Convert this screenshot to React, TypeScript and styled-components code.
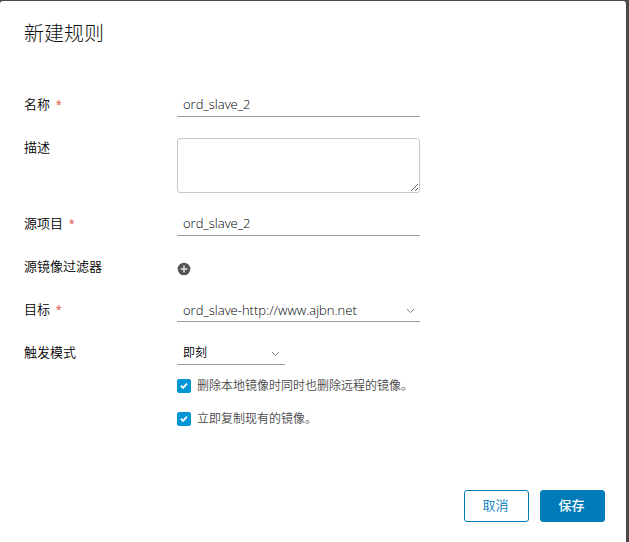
import React from "react";
import styled, { createGlobalStyle } from "styled-components";

const GlobalStyle = createGlobalStyle`
  *, *::before, *::after {
    box-sizing: border-box;
  }
  html, body, #root {
    height: 100%;
  }
  body {
    margin: 0;
    background: #484848;
    color: #000;
    font-family: "Open Sans", "Noto Sans CJK SC", sans-serif;
    font-size: 13px;
    font-weight: 350;
    line-height: 24px;
  }
  button, input, select, textarea {
    font: inherit;
  }
`;

const Backdrop = styled.div`
  min-height: 100%;
  display: flex;
  padding: 1px 3px 0 0;
`;

const Dialog = styled.form`
  flex: 1;
  display: flex;
  flex-direction: column;
  padding: 21px 21px 20px 24px;
  background: #fff;
  border-radius: 3px 3px 0 0;
`;

const Title = styled.h1`
  margin: 0 0 47px;
  font-size: 20px;
  font-weight: 300;
  line-height: 24px;
  color: #111;
`;

const Fields = styled.div`
  display: flex;
  flex-direction: column;
  gap: 19px;
`;

const Row = styled.div`
  display: grid;
  grid-template-columns: 153px minmax(0, 1fr);
  align-items: start;
  min-height: 24px;
`;

const Label = styled.label`
  display: flex;
  gap: 6px;
  line-height: 22px;
`;

const Asterisk = styled.span`
  color: #ea7a68;
  font-size: 10px;
  font-weight: 700;
`;

const TextInput = styled.input`
  width: 243px;
  max-width: 100%;
  height: 24px;
  padding: 0 6px 1px;
  border: 0;
  border-bottom: 1px solid #9a9a9a;
  border-radius: 0;
  background: transparent;
  color: #000;
  font-weight: 300;
  outline: none;
`;

const TextArea = styled.textarea`
  display: block;
  width: 243px;
  max-width: 100%;
  height: 55px;
  margin-top: 2px;
  padding: 4px 6px;
  border: 1px solid #c8c8c8;
  border-radius: 3px;
  background: #fff;
  outline: none;
`;

const SelectBox = styled.div<{ $compact?: boolean }>`
  display: grid;
  align-items: center;
  width: ${(p) => (p.$compact ? "108px" : "243px")};
  max-width: 100%;
  height: 24px;
  border-bottom: 1px solid #9a9a9a;
  font-size: ${(p) => (p.$compact ? "12px" : "13px")};
  font-weight: ${(p) => (p.$compact ? 350 : 300)};

  > * {
    grid-area: 1 / 1;
  }
  > svg {
    justify-self: end;
    margin: 2px 5px 0 0;
    pointer-events: none;
  }
`;

const Select = styled.select`
  appearance: none;
  width: 100%;
  height: 23px;
  padding: 0 20px 0 6px;
  border: 0;
  background: transparent;
  color: #000;
  outline: none;
`;

const IconButton = styled.button`
  display: flex;
  width: 14px;
  height: 24px;
  padding: 4px 0 0;
  align-items: center;
  border: 0;
  background: none;
  cursor: pointer;
`;

const TriggerOptions = styled.div`
  display: flex;
  flex-direction: column;
  gap: 9px;
`;

const CheckLabel = styled.label`
  display: flex;
  align-items: center;
  gap: 6px;
  min-height: 24px;
  font-size: 12px;
  color: #484848;
`;

const CheckText = styled.span`
  line-height: 20px;
`;

const CheckBox = styled.span`
  display: grid;
  flex: none;
  width: 14px;
  height: 14px;

  > * {
    grid-area: 1 / 1;
  }
  > svg {
    pointer-events: none;
  }
`;

const CheckInput = styled.input`
  appearance: none;
  width: 14px;
  height: 14px;
  margin: 0;
  border: 1px solid #0095d3;
  border-radius: 2px;
  background: #fff;

  &:checked {
    background: #0095d3;
  }
  &:not(:checked) + svg {
    display: none;
  }
`;

const Footer = styled.footer`
  display: flex;
  justify-content: flex-end;
  gap: 11px;
  margin-top: auto;
`;

const Button = styled.button<{ $primary?: boolean }>`
  width: 65px;
  height: 32px;
  padding: 0 2px 2px 0;
  border: 1px solid #007cbb;
  border-radius: 3px;
  background: ${(p) => (p.$primary ? "#007cbb" : "#fff")};
  color: ${(p) => (p.$primary ? "#fff" : "#007cbb")};
  font-weight: ${(p) => (p.$primary ? 500 : 350)};
  line-height: 28px;
  cursor: pointer;
`;

const Chevron = () => (
  <svg width="9" height="6" viewBox="0 0 9 6" fill="none" aria-hidden="true">
    <path d="M1 1l3.5 3.6L8 1" stroke="#8a8a8a" />
  </svg>
);

const PlusCircle = () => (
  <svg width="14" height="14" viewBox="0 0 14 14" aria-hidden="true">
    <circle cx="7" cy="7" r="6.3" fill="#545454" />
    <path d="M7 3.6v6.8M3.6 7h6.8" stroke="#e0e0e0" strokeWidth="1.5" />
  </svg>
);

const Tick = () => (
  <svg width="14" height="14" viewBox="0 0 14 14" fill="none" aria-hidden="true">
    <path d="M3.8 6.6l2.2 2.2 4-4.2" stroke="#fff" strokeWidth="1.9" />
  </svg>
);

interface FieldLabelProps {
  htmlFor: string;
  required?: boolean;
  children: React.ReactNode;
}

const FieldLabel = ({ htmlFor, required, children }: FieldLabelProps) => (
  <Label htmlFor={htmlFor}>
    {children}
    {required && <Asterisk>*</Asterisk>}
  </Label>
);

const Check = ({ children }: { children: React.ReactNode }) => (
  <CheckLabel>
    <CheckBox>
      <CheckInput type="checkbox" defaultChecked />
      <Tick />
    </CheckBox>
    <CheckText>{children}</CheckText>
  </CheckLabel>
);

export default function App() {
  return (
    <>
      <GlobalStyle />
      <Backdrop>
        <Dialog role="dialog" aria-labelledby="title" onSubmit={(e) => e.preventDefault()}>
          <Title id="title">新建规则</Title>
          <Fields>
            <Row>
              <FieldLabel htmlFor="name" required>名称</FieldLabel>
              <TextInput id="name" defaultValue="ord_slave_2" />
            </Row>
            <Row>
              <FieldLabel htmlFor="description">描述</FieldLabel>
              <TextArea id="description" />
            </Row>
            <Row>
              <FieldLabel htmlFor="project" required>源项目</FieldLabel>
              <TextInput id="project" defaultValue="ord_slave_2" />
            </Row>
            <Row>
              <FieldLabel htmlFor="filter">源镜像过滤器</FieldLabel>
              <IconButton id="filter" type="button">
                <PlusCircle />
              </IconButton>
            </Row>
            <Row>
              <FieldLabel htmlFor="target" required>目标</FieldLabel>
              <SelectBox>
                <Select id="target">
                  <option>ord_slave-http://www.ajbn.net</option>
                </Select>
                <Chevron />
              </SelectBox>
            </Row>
            <Row>
              <FieldLabel htmlFor="trigger">触发模式</FieldLabel>
              <TriggerOptions>
                <SelectBox $compact>
                  <Select id="trigger">
                    <option>即刻</option>
                  </Select>
                  <Chevron />
                </SelectBox>
                <Check>删除本地镜像时同时也删除远程的镜像。</Check>
                <Check>立即复制现有的镜像。</Check>
              </TriggerOptions>
            </Row>
          </Fields>
          <Footer>
            <Button type="button">取消</Button>
            <Button type="submit" $primary>保存</Button>
          </Footer>
        </Dialog>
      </Backdrop>
    </>
  );
}
